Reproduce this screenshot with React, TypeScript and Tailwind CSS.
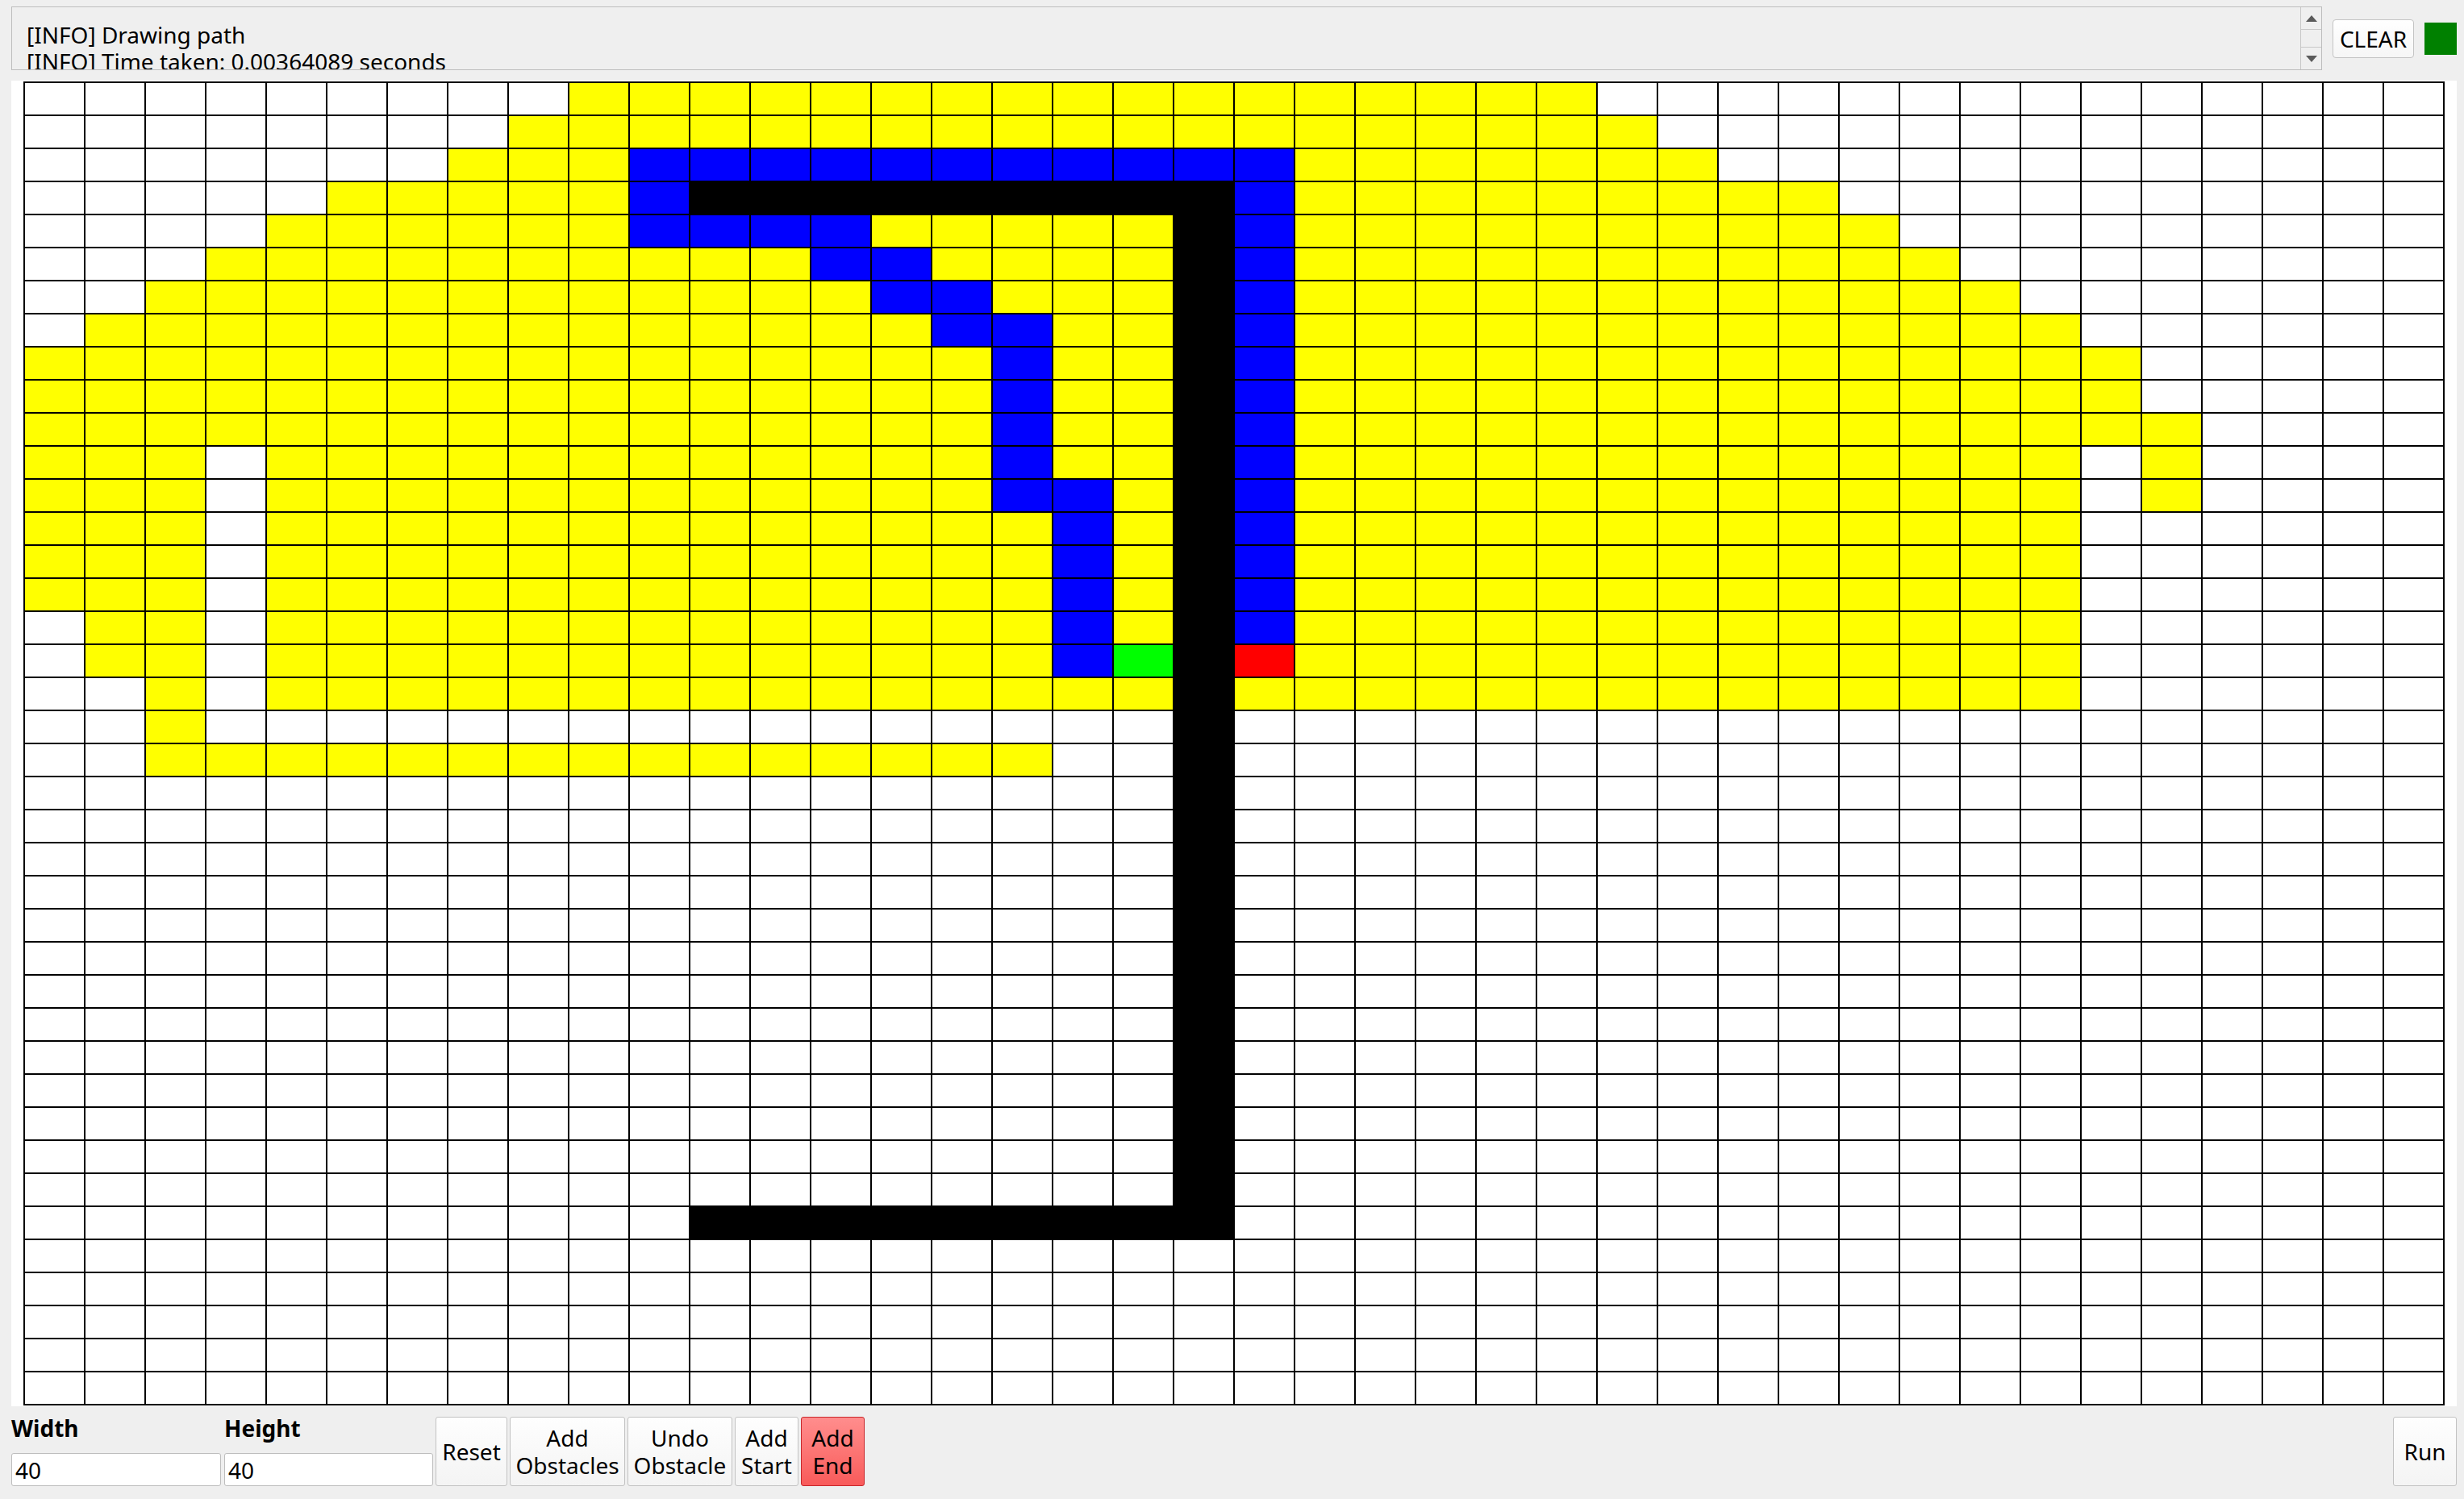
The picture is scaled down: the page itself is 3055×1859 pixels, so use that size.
type Cell = 'W' | 'Y' | 'B' | 'K' | 'G' | 'R';

const COLS = 40;
const ROWS = 40;

// yellow = visited cells, blue = path, black = obstacles
const yellowSpans: Record<number, [number, number][]> = {
  0: [[9, 25]],
  1: [[8, 26]],
  2: [[7, 27]],
  3: [[5, 29]],
  4: [[4, 30]],
  5: [[3, 31]],
  6: [[2, 32]],
  7: [[1, 33]],
  8: [[0, 34]],
  9: [[0, 34]],
  10: [[0, 35]],
  11: [[0, 2], [4, 33], [35, 35]],
  12: [[0, 2], [4, 33], [35, 35]],
  13: [[0, 2], [4, 33]],
  14: [[0, 2], [4, 33]],
  15: [[0, 2], [4, 33]],
  16: [[1, 2], [4, 33]],
  17: [[1, 2], [4, 33]],
  18: [[2, 2], [4, 33]],
  19: [[2, 2]],
  20: [[2, 16]],
};

const blueCells: [number, number][] = [];
for (let c = 10; c <= 20; c++) blueCells.push([2, c]);
blueCells.push([3, 10]);
for (let c = 10; c <= 13; c++) blueCells.push([4, c]);
blueCells.push([5, 13], [5, 14], [6, 14], [6, 15], [7, 15], [7, 16]);
for (let r = 8; r <= 12; r++) blueCells.push([r, 16]);
for (let r = 12; r <= 17; r++) blueCells.push([r, 17]);
for (let r = 3; r <= 16; r++) blueCells.push([r, 20]);

function buildGrid(): Cell[][] {
  const g: Cell[][] = Array.from({ length: ROWS }, () => Array<Cell>(COLS).fill('W'));
  Object.entries(yellowSpans).forEach(([r, spans]) => {
    spans.forEach(([a, b]) => {
      for (let c = a; c <= b; c++) g[Number(r)][c] = 'Y';
    });
  });
  blueCells.forEach(([r, c]) => (g[r][c] = 'B'));
  for (let c = 11; c <= 19; c++) {
    g[3][c] = 'K';
    g[34][c] = 'K';
  }
  for (let r = 3; r <= 34; r++) g[r][19] = 'K';
  g[17][18] = 'G';
  g[17][20] = 'R';
  return g;
}

const cellClass: Record<Cell, string> = {
  W: 'bg-white',
  Y: 'bg-[#ffff00]',
  B: 'bg-[#0000ff]',
  K: 'bg-black',
  G: 'bg-[#00ff00]',
  R: 'bg-[#ff0000]',
};

function Btn({ children, w, red }: { children: React.ReactNode; w: string; red?: boolean }) {
  return (
    <button
      className={`${w} h-[86px] rounded-[3px] border text-[28px] leading-[34px] text-center flex flex-col items-center justify-center bg-linear-to-b ${
        red
          ? 'border-[#c8262a] from-[#ff8d8d] to-[#f85a5a]'
          : 'border-[#c2c2c2] from-[#fefefe] to-[#f4f4f4]'
      }`}
    >
      {children}
    </button>
  );
}

function Field({ label, w }: { label: string; w: string }) {
  return (
    <div className={`${w} flex flex-col`}>
      <span className="h-[28px] text-[28px] leading-[28px] font-bold">{label}</span>
      <div className="mt-[17px] h-[41px] border border-[#bdbdbd] rounded-[3px] bg-white px-[4px] flex items-center text-[28px]">
        40
      </div>
    </div>
  );
}

export default function App() {
  const grid = buildGrid();

  return (
    <div className="w-[3055px] h-[1859px] bg-[#efefef] text-black font-['Noto_Sans',sans-serif] overflow-hidden">
      {/* log + clear */}
      <div className="h-[87px] pt-[8px] pl-[14px] pr-[9px] flex items-center gap-[13px]">
        <div className="w-[2865px] h-[79px] border border-[#bdbdbd] bg-[#efefef] flex">
          <div className="flex-1 overflow-hidden pl-[18px] pt-[18px] text-[28px] leading-[33px] whitespace-nowrap">
            <div>[INFO] Drawing path</div>
            <div>[INFO] Time taken: 0.00364089 seconds</div>
          </div>
          <div className="w-[26px] border-l border-[#c8c8c8] flex flex-col">
            <div className="h-[27px] flex items-center justify-center">
              <svg width="14" height="8" viewBox="0 0 14 8">
                <path d="M7 0 L14 8 L0 8 Z" fill="#5a5a5a" />
              </svg>
            </div>
            <div className="flex-1 border-y border-[#c8c8c8]" />
            <div className="h-[27px] flex items-center justify-center">
              <svg width="14" height="8" viewBox="0 0 14 8">
                <path d="M0 0 L14 0 L7 8 Z" fill="#5a5a5a" />
              </svg>
            </div>
          </div>
        </div>
        <button className="w-[101px] h-[48px] border border-[#c4c4c4] rounded-[4px] bg-linear-to-b from-[#ffffff] to-[#f6f6f6] text-[28px] leading-[34px]">
          CLEAR
        </button>
        <div className="w-[40px] h-[40px] bg-[#008000]" />
      </div>

      {/* grid view */}
      <div className="ml-[14px] mt-[13px] w-[3032px] h-[1644px] bg-white flex items-center justify-center">
        <div className="grid grid-cols-[repeat(40,73px)] grid-rows-[repeat(40,39px)] gap-[2px] p-[2px] bg-black">
          {grid.map((row, r) =>
            row.map((v, c) => <div key={`${r}-${c}`} className={cellClass[v]} />)
          )}
        </div>
      </div>

      {/* controls */}
      <div className="mt-[13px] h-[86px] pl-[14px] pr-[9px] flex">
        <Field label="Width" w="w-[260px]" />
        <div className="w-[4px]" />
        <Field label="Height" w="w-[259px]" />
        <div className="ml-[3px] flex gap-[3px]">
          <Btn w="w-[89px]">Reset</Btn>
          <Btn w="w-[143px]">
            <span>Add</span>
            <span>Obstacles</span>
          </Btn>
          <Btn w="w-[130px]">
            <span>Undo</span>
            <span>Obstacle</span>
          </Btn>
          <Btn w="w-[79px]">
            <span>Add</span>
            <span>Start</span>
          </Btn>
          <Btn w="w-[79px]" red>
            <span>Add</span>
            <span>End</span>
          </Btn>
        </div>
        <div className="flex-1" />
        <Btn w="w-[79px]">Run</Btn>
      </div>
    </div>
  );
}
